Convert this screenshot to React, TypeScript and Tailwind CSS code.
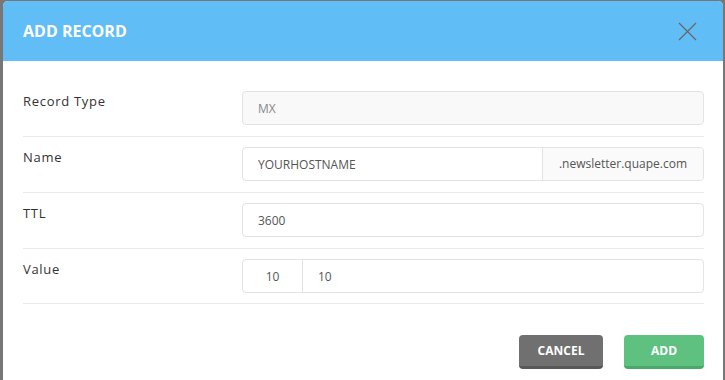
import { useState } from "react";

const labelCls = "w-[219px] shrink-0 text-[13px] leading-5 text-[#333] tracking-[0.7px]";
const inputCls =
  "h-[34px] w-full rounded-[4px] border border-[#e3e3e3] px-[15px] text-[12px] text-[#555] outline-none";

const AddRecordModal = () => {
  const [host, setHost] = useState("YOURHOSTNAME");
  const [ttl, setTtl] = useState("3600");
  const [prio, setPrio] = useState("10");
  const [val, setVal] = useState("10");

  return (
    <div className="h-[380px] w-[725px] bg-[#777] pl-[3px] pr-[2px] pt-[1px] font-['Open_Sans',sans-serif]">
      <div className="h-full overflow-hidden rounded-t-[5px] bg-white">
        <div className="flex h-[60px] items-center justify-between bg-[#61bdf6] pl-[20px] pr-[26px]">
          <h1 className="text-[16px] font-bold text-white">ADD RECORD</h1>
          <button className="text-[#666]">
            <svg width="19" height="19" viewBox="0 0 19 19" fill="none" stroke="currentColor" strokeWidth="1.2">
              <path d="M1 1l17 17M18 1L1 18" />
            </svg>
          </button>
        </div>

        <div className="pl-[20px] pr-[19px] pt-[20px]">
          <div className="flex border-b border-[#ebebeb] pb-[11px] pt-[10px]">
            <div className={labelCls}>Record Type</div>
            <input className={inputCls + " bg-[#f9f9f9] text-[#888]"} value="MX" readOnly />
          </div>

          <div className="flex border-b border-[#ebebeb] pb-[11px] pt-[10px]">
            <div className={labelCls}>Name</div>
            <div className="flex h-[34px] w-full rounded-[4px] border border-[#e3e3e3]">
              <input
                className="h-full min-w-0 flex-1 rounded-l-[4px] px-[15px] text-[12px] text-[#555] outline-none"
                value={host}
                onChange={(e) => setHost(e.target.value)}
              />
              <span className="flex w-[161px] items-center justify-center rounded-r-[4px] border-l border-[#e3e3e3] bg-[#fafafa] text-[12px] text-[#555]">
                .newsletter.quape.com
              </span>
            </div>
          </div>

          <div className="flex border-b border-[#ebebeb] pb-[11px] pt-[10px]">
            <div className={labelCls}>TTL</div>
            <input className={inputCls} value={ttl} onChange={(e) => setTtl(e.target.value)} />
          </div>

          <div className="flex border-b border-[#ebebeb] pb-[10px] pt-[10px]">
            <div className={labelCls}>Value</div>
            <div className="flex h-[34px] w-full rounded-[4px] border border-[#e3e3e3]">
              <input
                className="h-full w-[60px] rounded-l-[4px] border-r border-[#e3e3e3] text-center text-[12px] text-[#555] outline-none"
                value={prio}
                onChange={(e) => setPrio(e.target.value)}
              />
              <input
                className="h-full min-w-0 flex-1 rounded-r-[4px] px-[15px] text-[12px] text-[#555] outline-none"
                value={val}
                onChange={(e) => setVal(e.target.value)}
              />
            </div>
          </div>

          <div className="flex justify-end gap-[21px] pt-[31px]">
            <button className="h-[34px] w-[84px] rounded-[4px] border-b-[3px] border-[#585858] bg-[#6f706f] text-[12px] font-bold text-white">
              CANCEL
            </button>
            <button className="h-[34px] w-[80px] rounded-[4px] border-b-[3px] border-[#4aa86b] bg-[#5fc180] text-[12px] font-bold text-white">
              ADD
            </button>
          </div>
        </div>
      </div>
    </div>
  );
};

export default function App() {
  return <AddRecordModal />;
}
